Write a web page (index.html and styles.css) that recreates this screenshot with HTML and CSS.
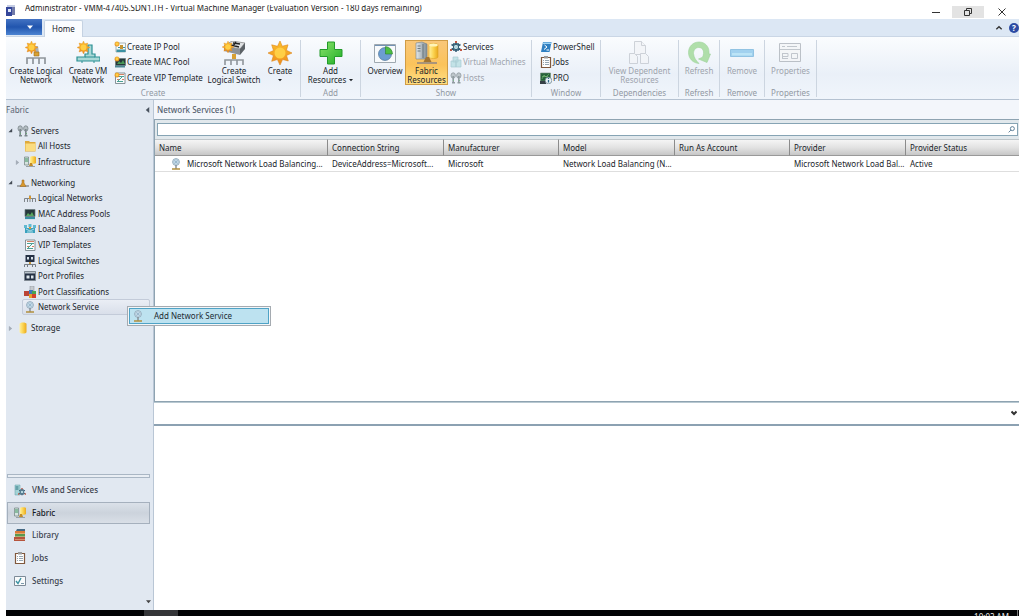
FILE: index.html
```html
<!DOCTYPE html>
<html lang="en">
<head>
<meta charset="utf-8">
<title>Virtual Machine Manager</title>
<link rel="stylesheet" href="styles.css">
</head>
<body>
<svg class="defs" aria-hidden="true">
  <defs>
    <linearGradient id="gSun" x1="0" y1="0" x2="0" y2="1"><stop offset="0" stop-color="#fbc02c"/><stop offset="1" stop-color="#ee8b1c"/></linearGradient>
    <linearGradient id="gPlus" x1="0" y1="0" x2="1" y2="1"><stop offset="0" stop-color="#8be36a"/><stop offset="1" stop-color="#1fae28"/></linearGradient>
    <linearGradient id="gCyl" x1="0" y1="0" x2="1" y2="0"><stop offset="0" stop-color="#fff0a0"/><stop offset="0.5" stop-color="#fbd350"/><stop offset="1" stop-color="#eaa91e"/></linearGradient>
    <linearGradient id="gSrv" x1="0" y1="0" x2="1" y2="0"><stop offset="0" stop-color="#e3e8eb"/><stop offset="1" stop-color="#7f8c94"/></linearGradient>
  </defs>
  <symbol id="sun" viewBox="0 0 24 24">
    <path fill="url(#gSun)" stroke="#dd861c" stroke-width=".6" d="M12 0l2.300 5.200L20 3.800l-1.600 5.500L24 12l-5.500 2.500L20.300 20l-5.700-1.500L12 24l-2.600-5.500L3.700 20.300l1.700-5.800L0 12l5.500-2.500L3.700 3.800l5.800 1.500z"/>
    <circle cx="12" cy="12" r="5.500" fill="#ffcf45"/>
  </symbol>
  <symbol id="logicalNet" viewBox="0 0 24 24">
    <path fill="none" stroke="#8f959b" stroke-width="1.700" d="M3 23v-6h18v6M9 17v6M15 17v6"/>
    <path fill="#aab0b6" d="M11 5h3l1 7h-5z"/><path fill="#d8a032" stroke="#9a6b1d" stroke-width=".6" d="M10 11h5v4h-5z"/>
    <use href="#sun" x="1" y="0" width="13" height="13"/>
  </symbol>
  <symbol id="vmNet" viewBox="0 0 24 24">
    <path fill="#a9d9d7" stroke="#2a8f93" stroke-width="1.200" d="M12 4h4v9h3v3h5v4H1v-4h8v-3h3z"/>
    <path stroke="#2a8f93" d="M9 16h10M6 20v2M18 20v2"/>
    <use href="#sun" x="1" y="0" width="13" height="13"/>
  </symbol>
  <symbol id="switch" viewBox="0 0 24 24">
    <path fill="#dfe2e4" stroke="#666" stroke-width=".6" d="M2 5l8-5 13 2-5 6z"/>
    <path fill="#8d9398" d="M2 5l16 3v6L2 10z"/><path fill="#5c6267" d="M18 8l5-6v6l-5 6z"/>
    <path stroke="#222" stroke-width="1.300" d="M11 2l7 1M9 4l8 2M14 1l-3 4"/>
    <path fill="#d8a032" d="M10 13h4v5h-4z"/>
    <path fill="none" stroke="#8f959b" stroke-width="1.600" d="M3 24v-5h18v5M9 19v5M15 19v5"/>
    <use href="#sun" x="0" y="0" width="12" height="12"/>
  </symbol>
  <symbol id="plus" viewBox="0 0 24 24"><path fill="url(#gPlus)" stroke="#239b2a" d="M8.500 1h7v7.500H23v7h-7.500V23h-7v-7.500H1v-7h7.500z"/></symbol>
  <symbol id="overview" viewBox="0 0 24 24">
    <path fill="#f8fafc" stroke="#9ea8b0" d="M1.500 3.500h21v18h-21z"/><path fill="#7393b5" d="M2 4h20v1H2z"/>
    <circle cx="12" cy="13" r="6.500" fill="#6c9dd1" stroke="#3c668f" stroke-width=".6"/>
    <path fill="#4cbe43" stroke="#2b7e2b" stroke-width=".6" d="M12.500 13V5.500A7.500 7.500 0 0 1 19.500 13z"/>
  </symbol>
  <symbol id="fabric" viewBox="0 0 24 24">
    <path fill="url(#gSrv)" stroke="#73818a" stroke-width=".6" d="M1 2l6-1 5 2v15H1z"/><path stroke="#56646d" stroke-width=".8" d="M2.500 5h3M2.500 7.500h3M2.500 10h3M8 3v14"/>
    <path fill="url(#gCyl)" stroke="#dca126" stroke-width=".6" d="M14 4c0-2 9-2 9 0v12c0 2-9 2-9 0z"/><ellipse cx="18.500" cy="4" rx="4.300" ry="1.500" fill="#fff4b9"/>
    <path fill="#a37430" d="M11 16h3l3 6H8z"/><path stroke="#a9947a" stroke-width="2" d="M2 22h20"/>
  </symbol>
  <symbol id="docs" viewBox="0 0 24 24">
    <g fill="#f3f5f8" stroke="#c4c9d0"><path d="M7.500.5h7l4 4v9h-11z"/><path d="M14.500.5v4h4"/><path d="M2.500 12.500h5l3 3v7h-8z"/><path d="M13.500 12.500h5l3 3v7h-8z"/></g>
  </symbol>
  <symbol id="refresh" viewBox="0 0 24 24">
    <path fill="#9fd996" stroke="#8aca84" stroke-width=".6" d="M12 22.500C5.500 22 1.500 17 1.500 11.500 1.500 5.500 6 1 12 1c6 0 10 4.500 10 10v2h1.500L20 21.500 11.500 18l4-1.700C18 11 16 6.500 11.800 6.500 8.500 6.500 6.500 9 6.500 12.500c.3 4 2.500 7 5.500 10z"/>
  </symbol>
  <symbol id="minus" viewBox="0 0 24 24"><path fill="#8dc8ec" stroke="#79b7de" d="M.5 8.500h23v7H.5z"/><path fill="#aee0f6" d="M2 12h20v2.500H2z"/></symbol>
  <symbol id="props" viewBox="0 0 24 24">
    <path fill="#f4f6f8" stroke="#aeb4bb" d="M1.500 2.500h21v18h-21z"/><path fill="none" stroke="#b5bbc2" d="M4 5.500h3M9 5.500h10M2 8.500h20M4.500 12v6M4 12.500h6v3H4M13.500 12.500h6v5h-6zM4 17.500h6"/>
  </symbol>
  <symbol id="ipPool" viewBox="0 0 12 12"><path fill="#f5fafb" stroke="#8a989b" stroke-width=".7" d="M2 2h9.500v9H2z"/><path fill="#3b91a3" d="M2.500 8.500h9V11h-9zM4 6h7v1H4z"/><path fill="#c49333" d="M6 4h3v4H6z"/><use href="#sun" width="6" height="6"/></symbol>
  <symbol id="macPool" viewBox="0 0 12 12"><path fill="#26383c" stroke="#69787b" stroke-width=".7" d="M1.500 2.500h10v7h-10z"/><path fill="#4a9a58" d="M3 8l2-3 2 2 2-3 2 4z"/><path stroke="#4d8794" stroke-width="2" d="M1 10.500h10"/><use href="#sun" width="6" height="6"/></symbol>
  <symbol id="macPoolPlain" viewBox="0 0 12 12"><path fill="#26383c" stroke="#69787b" stroke-width=".7" d="M1 1.500h10v7H1z"/><path fill="#58a55e" d="M2 8l2-3 2 2 2-3 2 4z"/><path stroke="#388ea2" stroke-width="2.200" d="M1 10h10"/></symbol>
  <symbol id="vipTpl" viewBox="0 0 12 12"><path fill="#f8fafb" stroke="#6c7b82" stroke-width=".8" d="M1.500 1h9.500v10.500H1.500z"/><path fill="none" stroke="#4ba195" d="M3 4.500h7M3 9.500h6M4 9l4-4"/><path fill="#d38165" d="M3 2h7v1H3zM3 7h2v1H3zM8 7h2v1H8z"/></symbol>
  <symbol id="vipNew" viewBox="0 0 12 12"><use href="#vipTpl" width="12" height="12"/><use href="#sun" width="6" height="6"/></symbol>
  <symbol id="gear" viewBox="0 0 12 12"><path fill="none" stroke="#315b73" stroke-width="1.500" d="M6 1v10M1.500 3.500l9 5M1.500 8.500l9-5M3 3h6M3 9h6"/><circle cx="6" cy="6" r="2.700" fill="#b5d6df" stroke="#315b73"/><path fill="#c05744" d="M5 0h2v2H5zM0 8h2v2H0zM10 8h2v2h-2z"/></symbol>
  <symbol id="vms" viewBox="0 0 12 12"><path fill="#b9dfe3" stroke="#98c2c9" stroke-width=".7" d="M3 1h5v5H3zM1 5h5v6H1zM6 4h5v7H6z"/></symbol>
  <symbol id="servers" viewBox="0 0 12 12"><g fill="#b4bdc2" stroke="#7b878c" stroke-width=".8"><ellipse cx="3.200" cy="3.500" rx="2.200" ry="2.700"/><ellipse cx="8.800" cy="3.500" rx="2.200" ry="2.700"/></g><path stroke="#7b878c" stroke-width="1.600" d="M3.200 4v7M8.800 4v7M2 10.800h3M7.500 10.800h3"/><path fill="#67ad72" d="M3 8h1v1H3zM9 8h1v1H9z"/></symbol>
  <symbol id="ps" viewBox="0 0 12 12"><path fill="#2f7fc1" d="M3 1h8.500L9.500 11H1z"/><path fill="#9bd2f3" d="M3.200 1.500h8L11 3H2.800z"/><path fill="none" stroke="#fff" d="M4.500 4l2.500 2-3 2.500M6.500 9H9"/></symbol>
  <symbol id="clip" viewBox="0 0 12 12"><path fill="#fff" stroke="#80583c" stroke-width="1.200" d="M1.500 1.500h9v10h-9z"/><path fill="#9b9b9b" d="M4 0h4v2.500H4z"/><path stroke="#698090" stroke-width=".7" d="M3 4.500h1M5 4.500h4M3 6.500h1M5 6.500h4M3 8.500h1M5 8.500h4"/></symbol>
  <symbol id="pro" viewBox="0 0 12 12"><path fill="#27633b" stroke="#718b77" stroke-width=".6" d="M.5 1h10v8H.5z"/><path fill="none" stroke="#7fc37a" stroke-width=".6" d="M2 7l2-4 2 2 3-3M2 4.500h6"/><path fill="#353f46" d="M0 9h6v3H0z"/><circle cx="8.500" cy="8.500" r="3.300" fill="#eaf2f7" stroke="#526c78" stroke-width=".6"/><path stroke="#296488" stroke-width="1.300" d="M8.500 8v2.500M8.500 6v1"/></symbol>
  <symbol id="folder" viewBox="0 0 12 12"><path fill="#dfaa3c" d="M1 1h4l1 1h5.500v9.500H1z"/><path fill="#fbdc80" d="M1.500 3.500h10v7.500h-10z"/></symbol>
  <symbol id="infra" viewBox="0 0 12 12"><path fill="#d6e2df" stroke="#70827f" stroke-width=".7" d="M.5 1h4v8h-4z"/><path stroke="#3d9561" d="M1 3h3M1 5h3"/><path fill="url(#gCyl)" d="M6 1c0-1 6-1 6 0v6c0 1-6 1-6 0z"/><path fill="#c28b27" d="M6 7h2l1 3H5z"/><path stroke="#9aa1a6" d="M2 10.500h9"/></symbol>
  <symbol id="network" viewBox="0 0 12 12"><path stroke="#8b9297" stroke-width="1.500" d="M0 9h12"/><path fill="#d9982c" stroke="#99651d" stroke-width=".5" d="M5 3h2v3l2 3.500H3L5 6z"/></symbol>
  <symbol id="logical" viewBox="0 0 12 12"><path fill="none" stroke="#7f858a" d="M.5 10V6.500h11V10M3.500 6v4M8.500 6v4M6 3v7"/><path fill="#d9982c" d="M5 4h2v3H5z"/></symbol>
  <symbol id="balancer" viewBox="0 0 12 12"><path fill="#3aa1be" d="M1 5h10v5H1z"/><path fill="#5fb9d0" d="M0 2h3v3H0zM4.500 1h3v3h-3zM9 2h3v3H9z"/><path fill="none" stroke="#dff3f6" stroke-width=".7" d="M2 6l4 2 4-2M3 9h6"/><path fill="#d99b35" d="M5 4h2v2H5z"/></symbol>
  <symbol id="lswitch" viewBox="0 0 12 12"><path fill="#253144" d="M1.500 0h9v7h-9z"/><path fill="#d8e2ea" d="M3 2h2v2.500H3zM7 2h2v2.500H7z"/><path fill="#c79638" d="M5 7h2v3H5z"/><path fill="none" stroke="#777e85" d="M.5 12V9.500h11V12M3.500 9v3M8.500 9v3"/></symbol>
  <symbol id="port" viewBox="0 0 12 12"><path fill="#253144" stroke="#7f8992" d="M.5 1.500h11v9H.5z"/><path fill="#b9c3cb" d="M1 2h10v1.500H1z"/><path fill="#dce5ea" d="M2.500 5.500h3v3h-3zM7 5.500h2.500v3H7z"/></symbol>
  <symbol id="portClass" viewBox="0 0 12 12"><path fill="#c6cbcf" stroke="#858e94" stroke-width=".5" d="M6 0h4v5H6z"/><path fill="#ba4436" d="M0 5h5v5H0z"/><path fill="#3f75bd" d="M5 4h4v4H5z"/><path fill="#4aa551" d="M8 5h4v3H8z"/><path fill="#e4a12c" d="M5 8h3v4H5z"/><path fill="#d54030" d="M8 8h4v4H8z"/></symbol>
  <symbol id="service" viewBox="0 0 12 12"><circle cx="6" cy="4" r="3.400" fill="#dbeaf4" stroke="#8ba5b7" stroke-width=".9"/><path fill="none" stroke="#90b2c9" stroke-width=".7" d="M6 1v6M3 4h6M4 2l4 4M8 2L4 6"/><path stroke="#879198" stroke-width="1.500" d="M6 7v4"/><path stroke="#b28f3d" stroke-width="1.500" d="M2 11h8"/></symbol>
  <symbol id="storage" viewBox="0 0 12 12"><path fill="url(#gCyl)" d="M2.500 2c0-2 7-2 7 0v8c0 2-7 2-7 0z"/></symbol>
  <symbol id="vmsvc" viewBox="0 0 12 12"><path fill="#a4d3d6" stroke="#5f9ea5" stroke-width=".5" d="M1 1h5v10H1z"/><path stroke="#286f7d" d="M1.500 3h3M1.500 5h3"/><use href="#gear" x="4" y="4" width="8" height="8"/></symbol>
  <symbol id="books" viewBox="0 0 12 12"><path fill="#466a84" d="M3 0h8v2H2z"/><path fill="#db7a35" d="M1 2h10v3H1z"/><path fill="#5a984e" d="M1 5h10v3H1z"/><path fill="#b6543c" d="M0 8h11v4H0z"/><path stroke="#efd1a2" stroke-width=".5" d="M1 4.500h10M1 7.500h10M1 10.500h10"/></symbol>
  <symbol id="settings" viewBox="0 0 12 12"><path fill="#f9fbfc" stroke="#7d8b98" d="M.5 1.500h11v9H.5z"/><path fill="none" stroke="#3a91a2" stroke-width="1.400" d="M2 6l2 2.500L7 3"/><path stroke="#7c9aac" d="M7 8.500h3"/></symbol>
  <symbol id="triOpen" viewBox="0 0 6 6"><path fill="#444b55" d="M5 .5V5H.5z"/></symbol>
  <symbol id="triShut" viewBox="0 0 6 6"><path fill="#a5adb7" stroke="#8d96a2" stroke-width=".5" d="M1.500.5L4.500 3l-3 2.500z"/></symbol>
  <symbol id="down" viewBox="0 0 6 6"><path fill="currentColor" d="M0 1.500h6L3 5z"/></symbol>
</svg>

<div class="window">
  <header class="titlebar">
    <svg class="app-icon" viewBox="0 0 9 11"><path fill="#c4cce3" d="M1 0h8v9H1z"/><path fill="#34469a" d="M0 2h6v9H0z"/><path fill="#707aa9" d="M6 2h3v8H6z"/><path fill="#dce8fb" d="M2 4h3v3H2z"/></svg>
    <div class="title">Administrator - VMM-47405.SDN1.TH - Virtual Machine Manager (Evaluation Version - 180 days remaining)</div>
    <div class="controls">
      <button aria-label="Minimize"><svg viewBox="0 0 8 8"><path d="M0 4.500h8"/></svg></button>
      <button class="restore" aria-label="Restore"><svg viewBox="0 0 8 8"><path d="M.5 2.500h5v5h-5zM2.500 2.500v-2h5v5h-2"/></svg></button>
      <button aria-label="Close"><svg viewBox="0 0 8 8"><path d="M.5.5l7 7M7.500.5l-7 7"/></svg></button>
    </div>
  </header>

  <nav class="tabs">
    <button class="file" aria-label="Application menu"><svg><use href="#down"/></svg></button>
    <button class="tab">Home</button>
    <button class="collapse" aria-label="Minimize ribbon"><svg viewBox="0 0 6 6"><path d="M1 4l2-2 2 2"/></svg></button>
    <button class="help" aria-label="Help">?</button>
  </nav>

  <section class="ribbon">
    <div class="group g-create">
      <div class="tools">
        <button class="big"><svg><use href="#logicalNet"/></svg>Create Logical<br>Network</button>
        <button class="big vm"><svg><use href="#vmNet"/></svg>Create VM<br>Network</button>
        <div class="stack">
          <button><svg><use href="#ipPool"/></svg>Create IP Pool</button>
          <button><svg><use href="#macPool"/></svg>Create MAC Pool</button>
          <button><svg><use href="#vipNew"/></svg>Create VIP Template</button>
        </div>
        <button class="big"><svg><use href="#switch"/></svg>Create<br>Logical Switch</button>
        <button class="big short"><svg><use href="#sun"/></svg>Create<span><svg class="arrow"><use href="#down"/></svg></span></button>
      </div>
      <h2>Create</h2>
    </div>
    <div class="group g-add">
      <div class="tools"><button class="big"><svg><use href="#plus"/></svg>Add<span>Resources <svg class="arrow"><use href="#down"/></svg></span></button></div>
      <h2>Add</h2>
    </div>
    <div class="group g-show">
      <div class="tools">
        <button class="big over"><svg><use href="#overview"/></svg>Overview</button>
        <button class="big active"><svg><use href="#fabric"/></svg>Fabric<br>Resources</button>
        <div class="stack">
          <button><svg><use href="#gear"/></svg>Services</button>
          <button disabled><svg><use href="#vms"/></svg>Virtual Machines</button>
          <button disabled><svg><use href="#servers"/></svg>Hosts</button>
        </div>
      </div>
      <h2>Show</h2>
    </div>
    <div class="group g-window">
      <div class="tools">
        <div class="stack">
          <button><svg><use href="#ps"/></svg>PowerShell</button>
          <button><svg><use href="#clip"/></svg>Jobs</button>
          <button><svg><use href="#pro"/></svg>PRO</button>
        </div>
      </div>
      <h2>Window</h2>
    </div>
    <div class="group g-dep"><div class="tools"><button class="big" disabled><svg><use href="#docs"/></svg>View Dependent<br>Resources</button></div><h2>Dependencies</h2></div>
    <div class="group g-ref"><div class="tools"><button class="big" disabled><svg><use href="#refresh"/></svg>Refresh</button></div><h2>Refresh</h2></div>
    <div class="group g-rem"><div class="tools"><button class="big" disabled><svg><use href="#minus"/></svg>Remove</button></div><h2>Remove</h2></div>
    <div class="group g-prop"><div class="tools"><button class="big" disabled><svg><use href="#props"/></svg>Properties</button></div><h2>Properties</h2></div>
  </section>

  <div class="body">
    <aside class="side">
      <div class="side-head">Fabric<button aria-label="Collapse pane"><svg viewBox="0 0 6 6"><path d="M4.500.5v5L1.500 3z"/></svg></button></div>
      <ul class="tree three">
        <li><svg class="tw"><use href="#triOpen"/></svg><svg><use href="#servers"/></svg><a href="#">Servers</a></li>
        <li class="sub"><svg><use href="#folder"/></svg><a href="#">All Hosts</a></li>
        <li class="sub"><svg class="tw"><use href="#triShut"/></svg><svg><use href="#infra"/></svg><a href="#">Infrastructure</a></li>
      </ul>
      <ul class="tree nine">
        <li><svg class="tw"><use href="#triOpen"/></svg><svg><use href="#network"/></svg><a href="#">Networking</a></li>
        <li class="sub"><svg><use href="#logical"/></svg><a href="#">Logical Networks</a></li>
        <li class="sub"><svg><use href="#macPoolPlain"/></svg><a href="#">MAC Address Pools</a></li>
        <li class="sub"><svg><use href="#balancer"/></svg><a href="#">Load Balancers</a></li>
        <li class="sub"><svg><use href="#vipTpl"/></svg><a href="#">VIP Templates</a></li>
        <li class="sub"><svg><use href="#lswitch"/></svg><a href="#">Logical Switches</a></li>
        <li class="sub"><svg><use href="#port"/></svg><a href="#">Port Profiles</a></li>
        <li class="sub"><svg><use href="#portClass"/></svg><a href="#">Port Classifications</a></li>
        <li class="sub picked"><svg><use href="#service"/></svg><a href="#">Network Service</a>
          <div class="menu" role="menu"><button role="menuitem"><svg><use href="#service"/></svg>Add Network Service</button></div>
        </li>
      </ul>
      <ul class="tree one">
        <li><svg class="tw"><use href="#triShut"/></svg><svg><use href="#storage"/></svg><a href="#">Storage</a></li>
      </ul>
      <div class="splitter"></div>
      <nav class="spaces">
        <a href="#"><svg><use href="#vmsvc"/></svg>VMs and Services</a>
        <a href="#" class="current"><svg><use href="#infra"/></svg>Fabric</a>
        <a href="#"><svg><use href="#books"/></svg>Library</a>
        <a href="#"><svg><use href="#clip"/></svg>Jobs</a>
        <a href="#"><svg><use href="#settings"/></svg>Settings</a>
      </nav>
      <button class="more" aria-label="More"><svg><use href="#down"/></svg></button>
    </aside>

    <main class="main">
      <h1>Network Services (1)</h1>
      <div class="list">
        <div class="search"><input type="text" aria-label="Search"><svg viewBox="0 0 8 8"><circle cx="5" cy="3" r="2.300"/><path d="M3.300 4.700L.7 7.300"/></svg></div>
        <table>
          <colgroup><col class="c-name"><col class="c-a"><col class="c-b"><col class="c-a"><col class="c-b"><col class="c-a"><col></colgroup>
          <thead><tr><th>Name</th><th>Connection String</th><th>Manufacturer</th><th>Model</th><th>Run As Account</th><th>Provider</th><th>Provider Status</th></tr></thead>
          <tbody><tr><td class="name"><svg><use href="#service"/></svg>Microsoft Network Load Balancing...</td><td>DeviceAddress=Microsoft...</td><td>Microsoft</td><td>Network Load Balancing (N...</td><td></td><td>Microsoft Network Load Bal...</td><td>Active</td></tr></tbody>
        </table>
      </div>
      <div class="detail-bar"><button aria-label="Expand details"><svg viewBox="0 0 6 6"><path d="M.5 1.500L3 4l2.500-2.500"/></svg></button></div>
      <div class="details"></div>
    </main>
  </div>

  <footer class="taskbar"><span class="task"></span><span class="clock">10:02 AM</span><span class="peek"></span></footer>
</div>
</body>
</html>
```
FILE: styles.css
```css
* { box-sizing: border-box; }
body { margin: 0; background: #fff; color: #20242a; font: 8px/10px "Noto Sans", "Open Sans", sans-serif; }
button, input { font: inherit; color: inherit; border: 0; padding: 0; margin: 0; background: none; }
a { color: inherit; text-decoration: none; }
ul { list-style: none; margin: 0; padding: 0; }
h1, h2 { margin: 0; font: inherit; }
svg { flex: none; display: block; }
.defs { position: absolute; width: 0; height: 0; }
.window { min-height: 100vh; padding: 0 5px 0 6px; display: flex; flex-direction: column; }

.titlebar { height: 19px; flex: none; display: flex; align-items: flex-start; }
.app-icon { width: 9px; height: 11px; margin: 5px 10px 0 0; }
.title { height: 10px; margin-top: 5px; overflow: hidden; line-height: 6px; white-space: nowrap; color: #222; }
.controls { margin-left: auto; display: flex; padding-top: 6px; }
.controls button { width: 32px; height: 12px; display: grid; place-items: center; }
.controls svg { width: 8px; height: 8px; fill: none; stroke: #333; }
.controls .restore { background: #e3e3e3; }
.controls button:last-child { width: 35px; }

.tabs { height: 18px; flex: none; display: flex; align-items: center; background: #dce7f4; border-bottom: 1px solid #cad6e5; }
.file { align-self: flex-start; width: 36px; height: 16px; display: flex; align-items: center; justify-content: flex-end; padding-right: 9px; color: #fff; background: linear-gradient(#4373c3, #2155ae 50%, #4c84d2); }
.file svg { width: 6px; height: 6px; }
.tab { align-self: flex-end; height: 17px; margin: 0 0 -1px 2px; padding: 0 7px; border: 1px solid #c5d2e2; border-bottom: 0; border-radius: 2px 2px 0 0; background: #fafcfe; }
.collapse { margin-left: auto; }
.collapse svg { width: 8px; height: 8px; fill: none; stroke: #333; }
.help { width: 10px; height: 10px; margin-left: 6px; border-radius: 50%; background: #2c4ba4; color: #fff; font-weight: bold; line-height: 10px; }

.ribbon { height: 63px; flex: none; display: flex; padding: 3px 0 2px; background: linear-gradient(#fafcfe, #eaf0f8 60%, #f0f5fb); border-bottom: 1px solid #b5c2d1; }
.group { display: flex; flex-direction: column; justify-content: space-between; border-right: 1px solid #ccd5e0; }
.group h2 { color: #9299a3; text-align: center; line-height: 9px; }
.tools { display: flex; justify-content: center; }
.g-create { width: 295px; }
.g-add { width: 60px; }
.g-show { width: 171px; }
.g-window { width: 69px; }
.g-dep { width: 78px; }
.g-ref { width: 41px; }
.g-rem { width: 45px; }
.g-prop { width: 52px; }
.big { display: flex; flex-direction: column; align-items: center; height: 45px; padding-top: 1px; line-height: 9px; white-space: nowrap; text-align: center; }
.big > svg { width: 24px; height: 24px; margin-bottom: 1px; }
.big span { display: flex; align-items: center; gap: 3px; min-height: 9px; }
.arrow { width: 4px; height: 4px; }
.g-create .big { width: 56px; }
.g-create .vm { width: 48px; }
.g-create .short { width: 36px; }
.g-show .tools { justify-content: flex-start; padding-left: 4px; }
.big.over { width: 40px; }
.big.active { width: 43px; background: linear-gradient(#f9c779, #fbc35b 55%, #ffdf83); border: 1px solid #d09c45; padding-top: 0; }
.stack { display: flex; flex-direction: column; padding: 0 2px; }
.stack button { height: 14px; display: flex; align-items: center; gap: 1px; white-space: nowrap; }
.stack button + button { height: 16px; }
.stack svg { width: 12px; height: 12px; }
.g-create .stack { width: 94px; }
.g-window .tools { justify-content: flex-start; padding-left: 6px; }
button:disabled { color: #9ea4ad; }
button:disabled svg { opacity: .8; }

.body { flex: 1; display: flex; }
.side { width: 148px; flex: none; display: flex; flex-direction: column; background: #e1e8f1; border-right: 1px solid #b9c6d5; }
.side-head { height: 23px; display: flex; align-items: flex-start; justify-content: space-between; padding: 5px 2px 0 0; color: #5b6573; }
.side-head svg { width: 7px; height: 10px; fill: #4a535f; }
.tree { display: grid; grid-auto-rows: 1fr; padding-right: 3px; }
.three { height: 47px; }
.nine { height: 140px; margin-top: 5px; }
.one { height: 16px; margin-top: 5px; }
.tree li { position: relative; display: flex; align-items: center; gap: 2px; padding-left: 11px; }
.tree .sub { padding-left: 18px; }
.tree svg { width: 12px; height: 12px; }
.tree svg.tw { position: absolute; left: 2px; width: 5px; height: 5px; }
.tree .sub .tw { left: 9px; }
.tree .picked { margin-left: 16px; padding-left: 1px; border: 1px solid #c3cbd9; border-radius: 2px; background: linear-gradient(#eaeef5, #d9dfea); }
.menu { position: absolute; z-index: 2; left: 104px; top: 6px; width: 144px; padding: 1px; background: #f4f6f8; border: 1px solid #a5abb1; }
.menu button { width: 100%; height: 16px; display: flex; align-items: center; gap: 10px; padding-left: 2px; background: #bde2f0; border: 1px solid #4fa3c6; color: #1c2b33; }
.splitter { margin: auto 3px 1px 1px; height: 4px; border: 1px solid #a9b6c4; background: #e9eef4; }
.spaces { height: 113px; display: grid; grid-auto-rows: 1fr; padding: 0 3px 0 1px; font-weight: 500; color: #39414c; }
.spaces a { display: flex; align-items: center; gap: 6px; padding-left: 7px; }
.spaces svg { width: 12px; height: 12px; }
.spaces .current { padding-left: 6px; color: #15191f; background: linear-gradient(#dbe1e9, #ccd3dc 50%, #d9dfe7); border: 1px solid #a5b0bd; }
.more { align-self: flex-end; height: 18px; padding-right: 2px; color: #444; }
.more svg { width: 5px; height: 5px; }

.main { flex: 1; min-width: 0; display: flex; flex-direction: column; }
.main h1 { height: 19px; padding: 5px 3px 0; color: #566170; font-weight: 500; background: #f3f6fb; }
.list { flex: 282; border: solid #8ea3b1; border-width: 1px 0 1px 1px; }
.search { display: flex; align-items: center; height: 19px; padding: 3px 1px 3px 2px; background: #e1e8ec; position: relative; }
.search input { flex: 1; height: 13px; padding: 0 14px 0 3px; background: #fff; border: 1px solid #86a4b4; }
.search svg { position: absolute; right: 4px; width: 7px; height: 7px; fill: none; stroke: #4c718d; }
table { width: 100%; table-layout: fixed; border-collapse: separate; border-spacing: 0; }
.c-name { width: 173px; }
.c-a { width: 116px; }
.c-b { width: 115px; }
th, td { height: 16px; padding: 0 4px; text-align: left; font-weight: normal; white-space: nowrap; overflow: hidden; }
th { height: 17px; background: linear-gradient(#f5f5f5, #e2e2e2 50%, #c7c7c7); border-right: 1px solid #8b8b8b; border-top: 1px solid #bfc6ca; border-bottom: 1px solid #999; }
th:last-child { border-right: 0; }
td { border-bottom: 1px solid #dedede; }
.name { padding-left: 32px; position: relative; }
.name svg { position: absolute; left: 15px; top: 2px; width: 12px; height: 12px; }
.detail-bar { height: 24px; display: flex; justify-content: flex-end; align-items: center; padding-right: 2px; border-top: 1px solid #b8c8d1; border-bottom: 2px solid #8ca1b2; }
.detail-bar svg { width: 6px; height: 6px; fill: none; stroke: #333; stroke-width: 2; }
.details { flex: 185; }

.taskbar { height: 6px; flex: none; display: flex; background: #020305; overflow: hidden; color: #eee; }
.task { width: 34px; margin-left: 138px; background: #343538; }
.clock { margin-left: auto; padding-top: 2px; }
.peek { margin-left: 8px; border-left: 1px solid #777; width: 2px; }
```
